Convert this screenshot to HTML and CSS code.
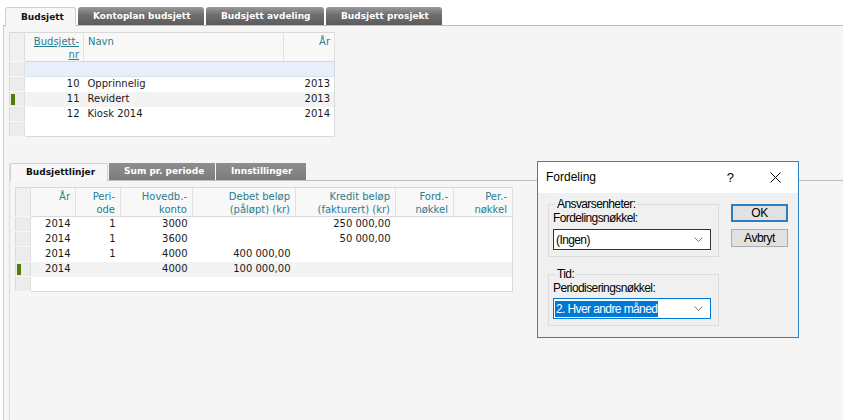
FILE: index.html
```html
<!DOCTYPE html>
<html lang="no">

<head>
  <meta charset="UTF-8">
  <meta name="viewport" content="width=device-width, initial-scale=1.0">
  <title>Budsjett</title>
  <link rel="stylesheet" href="styles.css">
</head>

<body>
  <div class="app">
    <div class="tabs tabs-main">
      <div class="tab active">Budsjett</div>
      <div class="tab">Kontoplan budsjett</div>
      <div class="tab">Budsjett avdeling</div>
      <div class="tab">Budsjett prosjekt</div>
    </div>

    <div class="panel">
      <table class="grid grid-top">
        <colgroup>
          <col class="w-ind">
          <col class="w-nr">
          <col class="w-navn">
          <col class="w-aar">
        </colgroup>
        <tr class="head">
          <th class="ind"></th>
          <th class="num"><a href="#">Budsjett-<br>nr</a></th>
          <th class="txt">Navn</th>
          <th class="num">År</th>
        </tr>
        <tr class="filter">
          <td class="ind"></td>
          <td colspan="3"></td>
        </tr>
        <tr>
          <td class="ind"></td>
          <td class="num">10</td>
          <td>Opprinnelig</td>
          <td class="num">2013</td>
        </tr>
        <tr class="current">
          <td class="ind"><span class="marker"></span></td>
          <td class="num">11</td>
          <td>Revidert</td>
          <td class="num">2013</td>
        </tr>
        <tr>
          <td class="ind"></td>
          <td class="num">12</td>
          <td>Kiosk 2014</td>
          <td class="num">2014</td>
        </tr>
        <tr>
          <td class="ind"></td>
          <td colspan="3"></td>
        </tr>
      </table>

      <div class="lines">
        <div class="tabs tabs-sub">
          <div class="tab active">Budsjettlinjer</div>
          <div class="tab">Sum pr. periode</div>
          <div class="tab">Innstillinger</div>
        </div>

        <div class="lines-body">
          <table class="grid grid-lines">
            <colgroup>
              <col class="w-ind">
              <col class="w-45">
              <col class="w-45">
              <col class="w-72">
              <col class="w-103">
              <col class="w-100">
              <col class="w-58">
              <col class="w-59">
            </colgroup>
            <tr class="head">
              <th class="ind"></th>
              <th class="num">År</th>
              <th class="num">Peri-<br>ode</th>
              <th class="num">Hovedb.-<br>konto</th>
              <th class="num">Debet beløp<br>(påløpt) (kr)</th>
              <th class="num">Kredit beløp<br>(fakturert) (kr)</th>
              <th class="num">Ford.-<br>nøkkel</th>
              <th class="num">Per.-<br>nøkkel</th>
            </tr>
            <tr>
              <td class="ind"></td>
              <td class="num">2014</td>
              <td class="num">1</td>
              <td class="num">3000</td>
              <td class="num"></td>
              <td class="num">250 000,00</td>
              <td></td>
              <td></td>
            </tr>
            <tr>
              <td class="ind"></td>
              <td class="num">2014</td>
              <td class="num">1</td>
              <td class="num">3600</td>
              <td class="num"></td>
              <td class="num">50 000,00</td>
              <td></td>
              <td></td>
            </tr>
            <tr>
              <td class="ind"></td>
              <td class="num">2014</td>
              <td class="num">1</td>
              <td class="num">4000</td>
              <td class="num">400 000,00</td>
              <td class="num"></td>
              <td></td>
              <td></td>
            </tr>
            <tr class="current">
              <td class="ind"><span class="marker"></span></td>
              <td class="num">2014</td>
              <td class="num"></td>
              <td class="num">4000</td>
              <td class="num">100 000,00</td>
              <td class="num"></td>
              <td></td>
              <td></td>
            </tr>
            <tr>
              <td class="ind"></td>
              <td colspan="7"></td>
            </tr>
          </table>
        </div>
      </div>
    </div>

    <!-- Fordeling dialog -->
    <div class="dialog">
      <div class="dlg-title">
        <span class="dlg-caption">Fordeling</span>
        <span class="dlg-help">?</span>
        <svg class="dlg-close" width="11" height="11" viewBox="0 0 11 11">
          <path d="M0.5 0.5 L10.5 10.5 M10.5 0.5 L0.5 10.5" stroke="#000" stroke-width="1" fill="none" />
        </svg>
      </div>
      <div class="dlg-body">
        <div class="dlg-groups">
          <fieldset class="group">
            <legend>Ansvarsenheter:</legend>
            <div class="field-label">Fordelingsnøkkel:</div>
            <div class="combo">
              <span class="combo-value">(Ingen)</span>
              <svg class="chevron" width="9" height="5" viewBox="0 0 9 5">
                <path d="M0.5 0.5 L4.5 4.5 L8.5 0.5" stroke="#7a7a7a" fill="none" />
              </svg>
            </div>
          </fieldset>
          <fieldset class="group group-tid">
            <legend>Tid:</legend>
            <div class="field-label">Periodiseringsnøkkel:</div>
            <div class="combo focused">
              <span class="combo-value selected">2. Hver andre måned</span>
              <svg class="chevron" width="9" height="5" viewBox="0 0 9 5">
                <path d="M0.5 0.5 L4.5 4.5 L8.5 0.5" stroke="#7a7a7a" fill="none" />
              </svg>
            </div>
          </fieldset>
        </div>
        <div class="dlg-buttons">
          <button class="btn default">OK</button>
          <button class="btn">Avbryt</button>
        </div>
      </div>
    </div>
  </div>
</body>

</html>
```

FILE: styles.css
```css
html,
body {
  height: 100%;
}

body {
  margin: 0;
  background-color: white;
  font-family: "DejaVu Sans", Verdana, sans-serif;
  font-size: 10px;
  color: #1a1a1a;
  overflow: hidden;
}

.app {
  height: 420px;
  display: flex;
  flex-direction: column;
  position: relative;
}

/* tabs */

.tabs {
  display: flex;
  gap: 2px;
  border-bottom: 1px solid #bdbdbd;
}

.tabs-main {
  padding: 7px 0 0 2px;
  margin-left: 3px;
}

.tab {
  height: 18px;
  line-height: 18px;
  padding: 0 15px;
  font-size: 9px;
  font-weight: bold;
  color: white;
  text-align: center;
  background: linear-gradient(#9a9a9a, #6e6e6e 45%, #5c5c5c);
  border-radius: 3px 3px 0 0;
  white-space: nowrap;
  box-sizing: border-box;
}

.tab.active {
  color: #111;
  background: #f7f7f7;
  border: 1px solid #cfcfcf;
  border-bottom: none;
  margin-bottom: -1px;
  height: 19px;
  line-height: 18px;
}

.tabs-main .tab.active { width: 71px; }
.tabs-main .tab:nth-child(2) { width: 126px; }
.tabs-main .tab:nth-child(3) { width: 118px; }
.tabs-main .tab:nth-child(4) { width: 116px; }

.tabs-sub {
  gap: 1px;
}

.tabs-sub .tab {
  height: 17px;
  line-height: 17px;
  background: linear-gradient(#8e8e8e, #7c7c7c);
  border-radius: 0;
}

.tabs-sub .tab.active {
  width: 98px;
  height: 18px;
  background: #f7f7f7;
  border-radius: 2px 2px 0 0;
}

.tabs-sub .tab:nth-child(2) { width: 106px; }
.tabs-sub .tab:nth-child(3) { width: 90px; }

/* main panel */

.panel {
  flex: 1;
  display: flex;
  flex-direction: column;
  margin-left: 3px;
  background: #f5f5f5;
  border-left: 1px solid #cdcdcd;
  padding: 6px 0 0 5px;
}

/* grids */

.grid {
  border-collapse: collapse;
  table-layout: fixed;
  background: white;
  border: 1px solid #d9d9d9;
}

.grid-top {
  width: 325px;
}

.w-ind { width: 15px; }
.w-nr { width: 59px; }
.w-navn { width: 200px; }
.w-aar { width: 51px; }
.w-45 { width: 45px; }
.w-72 { width: 72px; }
.w-103 { width: 103px; }
.w-100 { width: 100px; }
.w-58 { width: 58px; }
.w-59 { width: 59px; }

.grid th,
.grid td {
  padding: 0 4px;
  white-space: nowrap;
  overflow: hidden;
}

.grid td {
  height: 14px;
  line-height: 14px;
}

.grid th {
  height: 25px;
  line-height: 13px;
  padding-top: 2px;
  vertical-align: top;
  font-weight: normal;
  text-align: left;
  color: #2a7d8f;
  background: #f8f8f8;
  border-right: 1px solid #e0e0e0;
  border-bottom: 1px solid #d9d9d9;
}

.grid th a {
  color: #2a7d8f;
}

.grid .num {
  text-align: right;
}

.grid .ind {
  padding: 0 0 0 1px;
  background: #ececec;
  border-right: 1px solid #dedede;
  border-bottom: 1px solid #f7f7f7;
}

.grid th.ind {
  background: #f0f0f0;
}

.grid tr.filter td {
  background: #e6effa;
  border-bottom: 1px solid #d7e2ef;
}

.grid tr.filter td.ind {
  background: #ececec;
  border-bottom: 1px solid #f7f7f7;
}

.grid tr.current td {
  background: #f3f3f3;
}

.grid tr.current td.ind {
  background: #ececec;
}

.marker {
  display: block;
  width: 4px;
  height: 11px;
  background: #557a0c;
}

.grid-lines th,
.grid-lines td {
  padding-left: 5px;
  padding-right: 5px;
}

.grid-lines .ind {
  padding: 0 0 0 1px;
}

/* lower section */

.lines {
  flex: 1;
  display: flex;
  flex-direction: column;
  margin-top: 26px;
  border-left: 1px solid #dcdcdc;
}

.lines-body {
  flex: 1;
  padding: 6px 0 0 5px;
}

.grid-lines {
  width: 497px;
}

/* dialog */

.dialog {
  position: absolute;
  left: 537px;
  top: 161px;
  width: 262px;
  height: 177px;
  box-sizing: border-box;
  border: 1px solid #2c86c9;
  background: #f0f0f0;
  font-family: "Liberation Sans", Arial, sans-serif;
  font-size: 12px;
  color: #000;
  display: flex;
  flex-direction: column;
}

.dlg-title {
  height: 31px;
  line-height: 31px;
  background: white;
  padding-left: 8px;
  display: flex;
  align-items: center;
}

.dlg-caption {
  flex: 1;
}

.dlg-help {
  margin-right: 36px;
  font-size: 13px;
}

.dlg-close {
  margin-right: 17px;
}

.dlg-body {
  display: flex;
  padding: 4px 0 0 10px;
  letter-spacing: -0.6px;
}

.dlg-groups {
  width: 171px;
}

.group {
  margin: 0;
  padding: 0 7px 6px 4px;
  border: 1px solid #dcdcdc;
}

.group legend {
  padding: 0 2px;
  margin-left: 2px;
  line-height: 14px;
}

.group-tid {
  margin-top: 10px;
}

.field-label {
  line-height: 15px;
  margin: 0 0 3px;
}

.group-tid .field-label {
  margin-bottom: 2px;
}

.combo {
  height: 21px;
  box-sizing: border-box;
  border: 1px solid #333;
  background: white;
  display: flex;
  align-items: center;
  justify-content: space-between;
  padding: 0 7px 0 1px;
}

.combo.focused {
  border-color: #0078d7;
}

.combo-value {
  line-height: 16px;
  padding: 0 1px;
}

.combo-value.selected {
  background: #0078d7;
  color: white;
}

.dlg-buttons {
  display: flex;
  flex-direction: column;
  gap: 7px;
  margin: 7px 0 0 12px;
}

.btn {
  width: 57px;
  height: 18px;
  padding: 0;
  font-family: "Liberation Sans", Arial, sans-serif;
  font-size: 12px;
  letter-spacing: -0.5px;
  background: #e1e1e1;
  border: 1px solid #adadad;
  color: #000;
}

.btn.default {
  border: 2px solid #2a7fc4;
}
```
